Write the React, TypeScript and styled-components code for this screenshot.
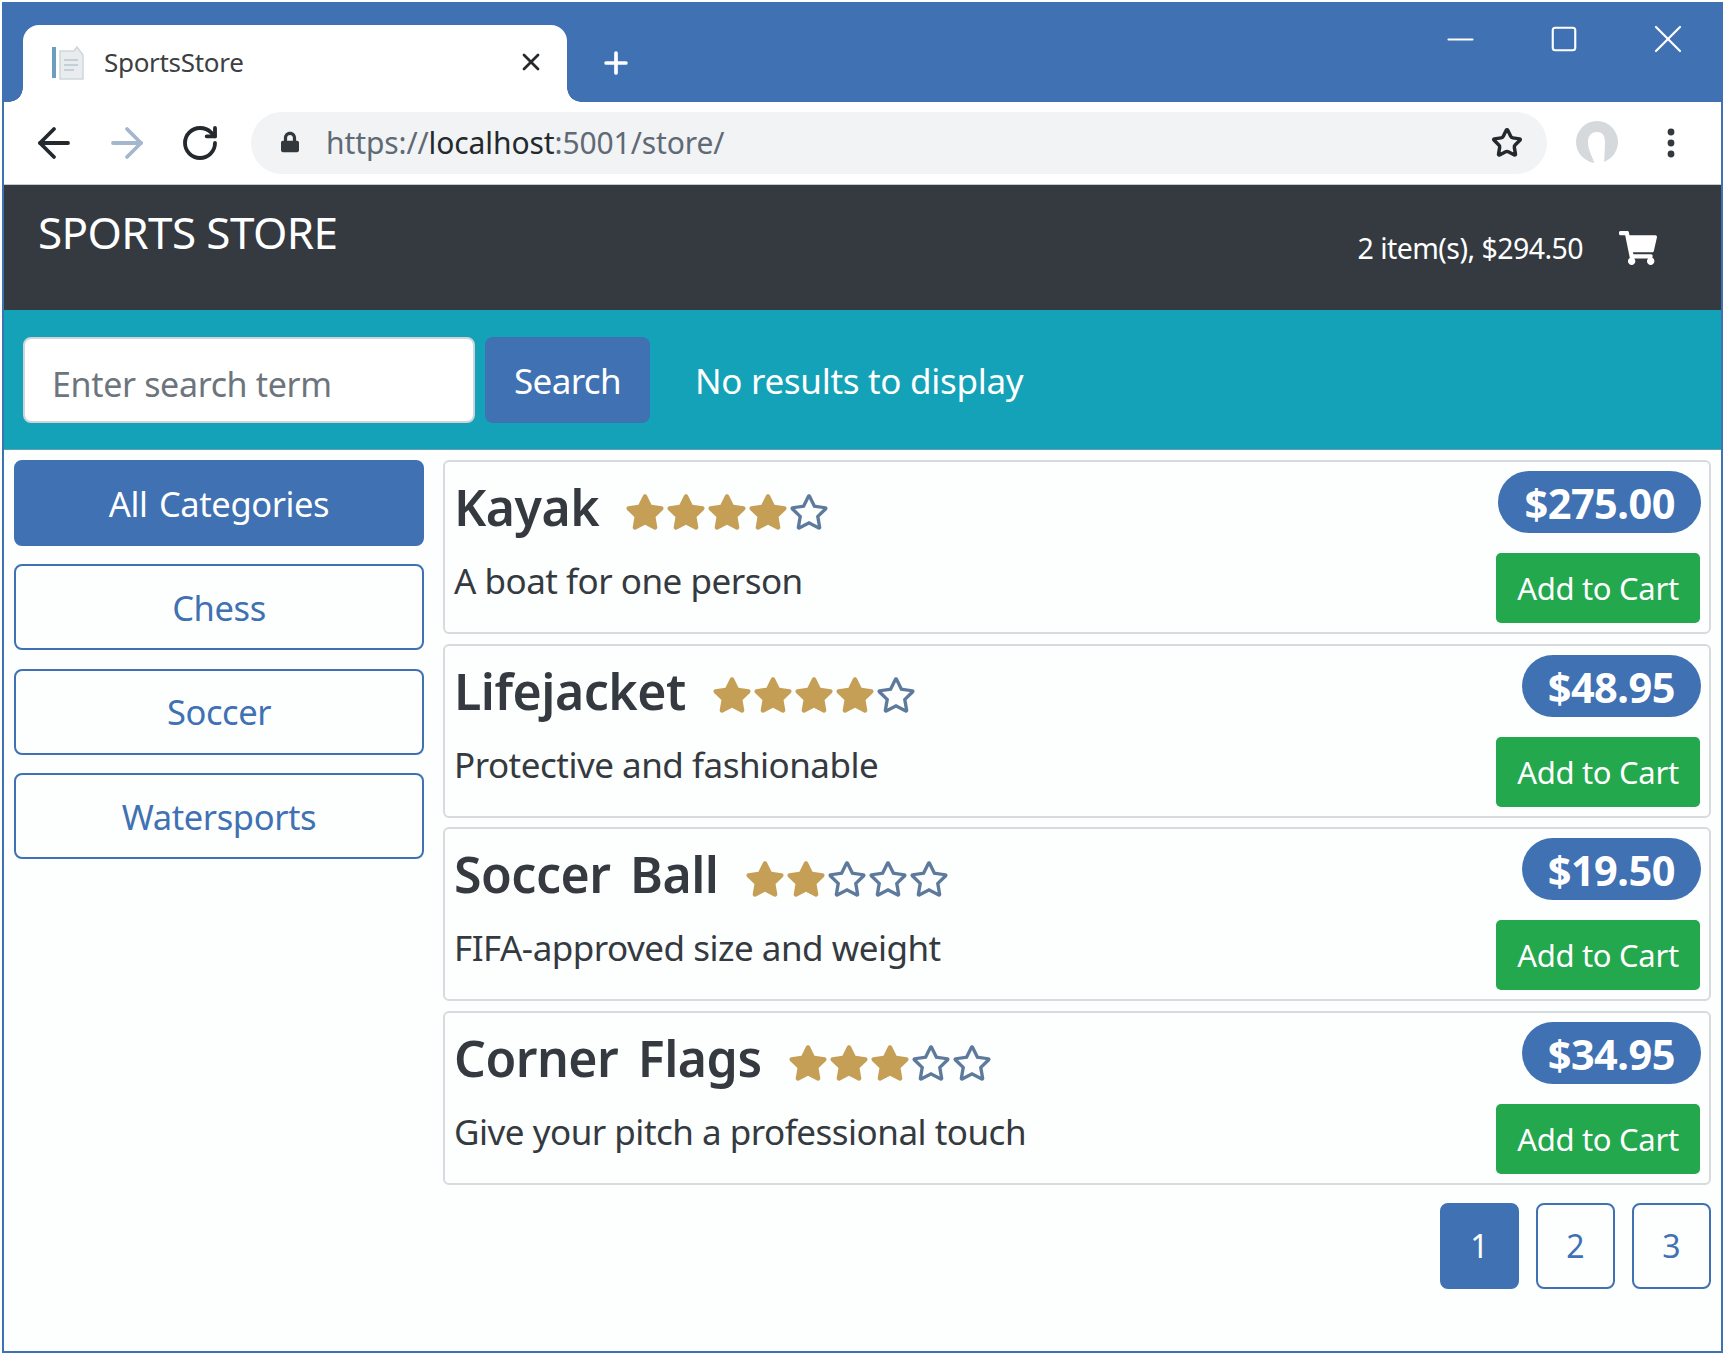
import React from "react";
import styled, { createGlobalStyle } from "styled-components";
import { ArrowLeft, ArrowRight, RotateCw, Star, X, Plus, Minus, Square } from "lucide-react";
import { FaStar, FaRegStar, FaShoppingCart, FaLock } from "react-icons/fa";

const BLUE = "#3f71b3";
const FONT = `"Noto Sans", "Open Sans", sans-serif`;

const Global = createGlobalStyle`
  html, body { margin: 0; padding: 0; background: #fff; }
  * { box-sizing: border-box; }
  body { font-family: ${FONT}; color: #343a40; }
`;

const Frame = styled.div`
  width: 1721px;
  height: 1351px;
  margin: 2px 0 0 2px;
  border: 2px solid ${BLUE};
  border-top: 0;
  background: #fdfefe;
  overflow: hidden;
`;

const TitleBar = styled.div`
  height: 100px;
  background: ${BLUE};
  display: flex;
  align-items: flex-end;
  padding-left: 19px;
`;

const Tab = styled.div`
  position: relative;
  width: 544px;
  height: 77px;
  background: #fff;
  border-radius: 16px 16px 0 0;
  display: flex;
  align-items: center;
  padding: 0 22px 4px 28px;

  &::before, &::after {
    content: "";
    position: absolute;
    bottom: 0;
    width: 14px;
    height: 14px;
    background: radial-gradient(circle at var(--cx) 0, ${BLUE} 13.5px, #fff 14px);
  }
  &::before { left: -14px; --cx: 0; }
  &::after { right: -14px; --cx: 14px; }
`;

const Favicon = styled.svg`
  width: 36px;
  height: 38px;
  flex: none;
`;

const TabTitle = styled.span`
  margin-left: 17px;
  flex: 1;
  font-size: 26px;
  color: #3c4043;
  letter-spacing: -0.3px;
`;

const TabClose = styled(X)`
  width: 28px;
  height: 28px;
  color: #26292c;
`;

const NewTab = styled(Plus)`
  width: 34px;
  height: 34px;
  margin: 0 0 22px 32px;
  color: #fff;
  stroke-width: 2.6;
`;

const WindowControls = styled.div`
  margin-left: auto;
  align-self: flex-start;
  display: flex;
  align-items: center;
  gap: 64px;
  padding: 17px 33px 0 0;
  color: #fff;
`;

const WindowControl = styled.div`
  width: 40px;
  height: 40px;
  display: flex;
  align-items: center;
  justify-content: center;

  svg { flex: none; }
`;

const Toolbar = styled.div`
  height: 83px;
  background: #fff;
  display: flex;
  align-items: center;
  padding-left: 32px;
  border-bottom: 1px solid #c8ccd0;
`;

const NavButton = styled.div<{ $faded?: boolean }>`
  width: 36px;
  height: 36px;
  margin-right: 37px;
  color: ${(p) => (p.$faded ? "#a4b7cd" : "#24292e")};
  display: flex;
  align-items: center;
  justify-content: center;

  svg { flex: none; }
`;

const Omnibox = styled.div`
  width: 1296px;
  height: 62px;
  margin-left: -4px;
  background: #f1f3f4;
  border-radius: 31px;
  display: flex;
  align-items: center;
  padding: 0 24px 0 30px;
`;

const LockIcon = styled(FaLock)`
  width: 18px;
  height: 24px;
  margin-bottom: 3px;
  color: #33383d;
`;

const Url = styled.span`
  margin-left: 27px;
  flex: 1;
  font-size: 30px;
  letter-spacing: -0.1px;
  color: #5f6a74;
  padding-bottom: 2px;
`;

const UrlHost = styled.span`
  color: #24292e;
`;

const ProfileIcon = styled.svg`
  width: 46px;
  height: 46px;
  margin-left: 27px;
  flex: none;
`;

const MenuDots = styled.svg`
  width: 10px;
  height: 30px;
  margin-left: 46px;
  flex: none;
`;

const NavBar = styled.div`
  height: 125px;
  background: #343a40;
  color: #fff;
  display: flex;
  justify-content: space-between;
  padding: 17px 0 0 34px;
`;

const Brand = styled.div`
  font-size: 44px;
  line-height: 60px;
  letter-spacing: -0.6px;
`;

const CartSummary = styled.div`
  display: flex;
  align-items: center;
  height: 60px;
  margin-top: 16px;
  padding-right: 64px;
  font-size: 28.5px;
  letter-spacing: -0.55px;
`;

const CartIcon = styled(FaShoppingCart)`
  width: 38px;
  height: 34px;
  margin-left: 36px;
`;

const SearchBar = styled.div`
  height: 140px;
  background: #14a2b8;
  display: flex;
  align-items: center;
  padding: 0 0 0 19px;
  border-bottom: 1px solid #5fa0b5;
`;

const SearchInput = styled.div`
  width: 452px;
  height: 86px;
  background: #fff;
  border: 2px solid #cdd4da;
  border-radius: 8px;
  font-size: 34px;
  color: #6c757d;
  display: flex;
  align-items: center;
  padding: 8px 0 0 27px;
  letter-spacing: -0.35px;
`;

const SearchButton = styled.div`
  width: 165px;
  height: 86px;
  margin-left: 10px;
  background: ${BLUE};
  border-radius: 8px;
  color: #fff;
  font-size: 35px;
  display: flex;
  align-items: center;
  justify-content: center;
  padding-top: 2px;
  letter-spacing: -0.6px;
`;

const NoResults = styled.div`
  margin-left: 45px;
  font-size: 35px;
  color: #fff;
  padding-top: 2px;
  letter-spacing: -0.3px;
`;

const Content = styled.div`
  display: flex;
  align-items: flex-start;
  padding: 10px 10px 0 10px;
  gap: 19px;
`;

const Sidebar = styled.div`
  width: 410px;
  flex: none;
  display: flex;
  flex-direction: column;
  gap: 18.4px;
`;

const CategoryButton = styled.div<{ $active?: boolean }>`
  height: 86px;
  border: 2px solid ${BLUE};
  border-radius: 8px;
  background: ${(p) => (p.$active ? BLUE : "transparent")};
  color: ${(p) => (p.$active ? "#fff" : BLUE)};
  font-size: 34.5px;
  letter-spacing: -0.4px;
  word-spacing: 3px;
  display: flex;
  align-items: center;
  justify-content: center;
`;

const Main = styled.div`
  flex: 1;
  display: flex;
  flex-direction: column;
  gap: 9.7px;
`;

const Card = styled.div`
  height: 174px;
  border: 2px solid #d6dbdf;
  border-radius: 6px;
  display: flex;
  justify-content: space-between;
  padding: 9px 8px 8px 9px;
`;

const CardInfo = styled.div`
  display: flex;
  flex-direction: column;
`;

const TitleRow = styled.div`
  display: flex;
  align-items: center;
  height: 72px;
`;

const CardTitle = styled.div`
  font-size: 50px;
  font-weight: 600;
  line-height: 70px;
  letter-spacing: -0.5px;
  word-spacing: 7px;
`;

const Stars = styled.div`
  display: flex;
  margin: 9px 0 0 26px;
`;

const FilledStar = styled(FaStar)`
  width: 40px;
  height: 36px;
  margin-right: 1px;
  color: #c59f55;
`;

const EmptyStar = styled(FaRegStar)`
  width: 40px;
  height: 36px;
  margin-right: 1px;
  color: #5d7a9c;
`;

const Description = styled.div`
  margin-top: 15px;
  font-size: 35px;
  line-height: 46px;
  letter-spacing: -0.5px;
`;

const CardActions = styled.div`
  display: flex;
  flex-direction: column;
  align-items: flex-end;
  gap: 20px;
`;

const Price = styled.div`
  height: 62px;
  padding: 2px 26px 0;
  background: ${BLUE};
  border-radius: 31px;
  color: #fff;
  font-size: 41.5px;
  font-weight: 700;
  display: flex;
  align-items: center;
  letter-spacing: -0.5px;
`;

const AddButton = styled.div`
  width: 204px;
  height: 70px;
  margin-right: 1px;
  background: #23a84e;
  border-radius: 5px;
  color: #fff;
  font-size: 31px;
  letter-spacing: -0.3px;
  display: flex;
  align-items: center;
  justify-content: center;
`;

const Pagination = styled.div`
  display: flex;
  justify-content: flex-end;
  gap: 17px;
  margin-top: 8px;
`;

const PageButton = styled.div<{ $active?: boolean }>`
  width: 79px;
  height: 86px;
  border: 2px solid ${BLUE};
  border-radius: 8px;
  background: ${(p) => (p.$active ? BLUE : "transparent")};
  color: ${(p) => (p.$active ? "#fff" : BLUE)};
  font-size: 32px;
  display: flex;
  align-items: center;
  justify-content: center;
`;

const products = [
  { name: "Kayak", stars: 4, text: "A boat for one person", price: "$275.00" },
  { name: "Lifejacket", stars: 4, text: "Protective and fashionable", price: "$48.95" },
  { name: "Soccer Ball", stars: 2, text: "FIFA-approved size and weight", price: "$19.50" },
  { name: "Corner Flags", stars: 3, text: "Give your pitch a professional touch", price: "$34.95" },
];

export default function App() {
  return (
    <Frame>
      <Global />
      <TitleBar>
        <Tab>
          <Favicon viewBox="0 0 36 38">
            <rect x="1" y="4" width="4" height="31" fill="#6b9fc0" />
            <path d="M9 8h14l3-4 6 8v24H9z" fill="#e8ecef" stroke="#cfd6da" strokeWidth="1.5" />
            <path d="M13 17h14M13 22h14M13 27h10" stroke="#c4d0d8" strokeWidth="2" />
          </Favicon>
          <TabTitle>SportsStore</TabTitle>
          <TabClose strokeWidth={2.4} />
        </Tab>
        <NewTab />
        <WindowControls>
          <WindowControl><Minus size={41} strokeWidth={1.3} /></WindowControl>
          <WindowControl><Square size={30} strokeWidth={1.7} /></WindowControl>
          <WindowControl><X size={48} strokeWidth={1.1} /></WindowControl>
        </WindowControls>
      </TitleBar>
      <Toolbar>
        <NavButton><ArrowLeft size={48} strokeWidth={1.9} /></NavButton>
        <NavButton $faded><ArrowRight size={48} strokeWidth={1.9} /></NavButton>
        <NavButton><RotateCw size={40} strokeWidth={2.3} /></NavButton>
        <Omnibox>
          <LockIcon />
          <Url>
            https://<UrlHost>localhost</UrlHost>:5001/store/
          </Url>
          <Star size={32} strokeWidth={2.6} color="#24292e" />
        </Omnibox>
        <ProfileIcon viewBox="0 0 46 46">
          <circle cx="23" cy="22" r="21" fill="#d5d9dc" />
          <path d="M21 46C19 36 14 32 14 22C14 15 18 12 23 12C28 12 31 15 31 22L30 46Z" fill="#fff" />
        </ProfileIcon>
        <MenuDots viewBox="0 0 10 30">
          <circle cx="5" cy="4" r="3.4" fill="#33383d" />
          <circle cx="5" cy="15" r="3.4" fill="#33383d" />
          <circle cx="5" cy="26" r="3.4" fill="#33383d" />
        </MenuDots>
      </Toolbar>
      <NavBar>
        <Brand>SPORTS STORE</Brand>
        <CartSummary>
          2 item(s), $294.50
          <CartIcon />
        </CartSummary>
      </NavBar>
      <SearchBar>
        <SearchInput>Enter search term</SearchInput>
        <SearchButton>Search</SearchButton>
        <NoResults>No results to display</NoResults>
      </SearchBar>
      <Content>
        <Sidebar>
          <CategoryButton $active>All Categories</CategoryButton>
          <CategoryButton>Chess</CategoryButton>
          <CategoryButton>Soccer</CategoryButton>
          <CategoryButton>Watersports</CategoryButton>
        </Sidebar>
        <Main>
          {products.map((p) => (
            <Card key={p.name}>
              <CardInfo>
                <TitleRow>
                  <CardTitle>{p.name}</CardTitle>
                  <Stars>
                    {[0, 1, 2, 3, 4].map((i) =>
                      i < p.stars ? <FilledStar key={i} /> : <EmptyStar key={i} />
                    )}
                  </Stars>
                </TitleRow>
                <Description>{p.text}</Description>
              </CardInfo>
              <CardActions>
                <Price>{p.price}</Price>
                <AddButton>Add to Cart</AddButton>
              </CardActions>
            </Card>
          ))}
          <Pagination>
            <PageButton $active>1</PageButton>
            <PageButton>2</PageButton>
            <PageButton>3</PageButton>
          </Pagination>
        </Main>
      </Content>
    </Frame>
  );
}
